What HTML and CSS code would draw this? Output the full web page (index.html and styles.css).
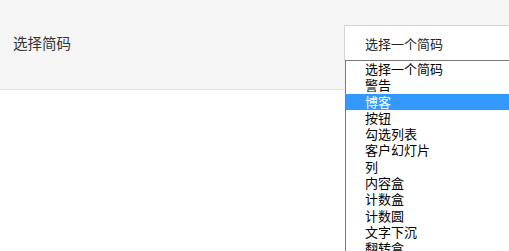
FILE: index.html
```html
<!DOCTYPE html>
<html lang="zh-CN">
<head>
    <meta charset="UTF-8">
    <title>选择简码</title>
    <link rel="stylesheet" href="styles.css">
</head>
<body>
<div class="panel">
  <label class="panel-label">选择简码</label>

  <div class="picker">
    <!-- the closed select box -->
    <div class="picker-box">选择一个简码</div>

    <!-- open list, lies over the page below -->
    <ul class="picker-list">
      <li>选择一个简码</li>
      <li>警告</li>
      <li class="active">博客</li>
      <li>按钮</li>
      <li>勾选列表</li>
      <li>客户幻灯片</li>
      <li>列</li>
      <li>内容盒</li>
      <li>计数盒</li>
      <li>计数圆</li>
      <li>文字下沉</li>
      <li>翻转盒</li>
    </ul>
  </div>
</div>
</body>
</html>
```

FILE: styles.css
```css
body {
    margin: 0;
    min-height: 251px;
    background: #fff;
    font-family: "Noto Sans CJK SC", "Noto Sans", sans-serif;
}

.panel {
    display: grid;
    grid-template-columns: 331px 1fr;
    align-items: start;
    height: 64px;
    padding: 25px 0 0 13px;
    background: #f5f5f5;
    border-bottom: 1px solid #e2e2e2;
}

.panel-label {
    font-size: 14.5px;
    line-height: 36px;
    color: #333;
}

.picker {
    position: relative;
}

.picker-box {
    box-sizing: border-box;
    height: 36px;
    padding-left: 20px;
    border: 1px solid #d4d4d4;
    border-right: 0;
    background: #fff;
    font-size: 13px;
    line-height: 36px;
    color: #222;
}

.picker-list {
    position: absolute;
    top: 35px;
    left: 1px;
    right: 0;
    margin: 0;
    padding: 0;
    list-style: none;
    background: #fff;
    border: 1px solid #7a7a7a;
    border-right: 0;
    border-bottom: 0;
    height: 195px;
    overflow: hidden;
}

.picker-list li {
    height: 16.3px;
    padding-left: 19px;
    font-size: 13px;
    line-height: 16.3px;
    color: #000;
}

.picker-list li.active {
    background: #3399ff;
    color: #fff;
}
```
